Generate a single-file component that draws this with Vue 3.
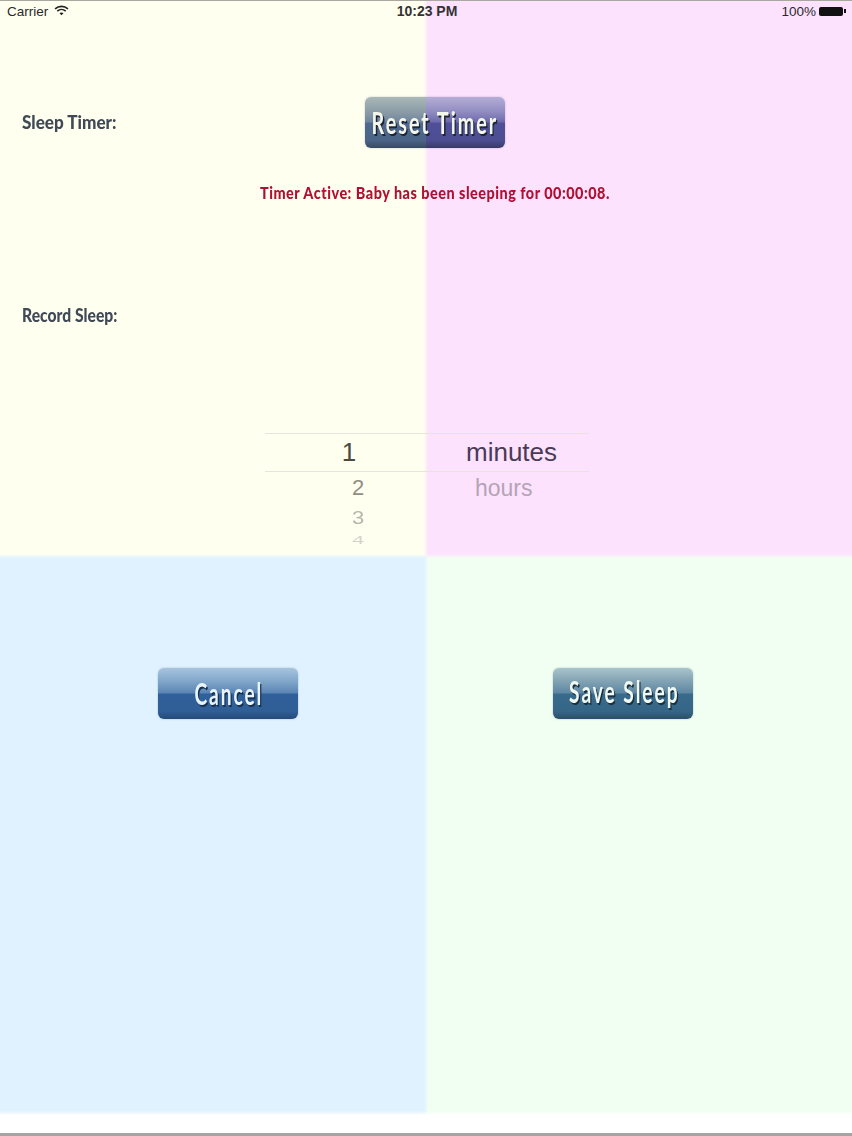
<script setup>
const numbers = [
  { value: '2', cls: 'n2' },
  { value: '3', cls: 'n3' },
  { value: '4', cls: 'n4' },
]
</script>

<template>
  <div class="screen">
    <header class="status">
      <div class="status-left">
        <span>Carrier</span>
        <svg class="wifi" viewBox="0 0 16 12" width="15" height="11">
          <path d="M1 4.2C5 .6 11 .6 15 4.2" fill="none" stroke="#222" stroke-width="1.7" />
          <path d="M3.4 6.6C6 4.4 10 4.4 12.6 6.6" fill="none" stroke="#222" stroke-width="1.7" />
          <path d="M5.8 9C7 8 9 8 10.2 9L8 11.2Z" fill="#222" />
        </svg>
      </div>
      <div class="status-time">10:23 PM</div>
      <div class="status-right">
        <span>100%</span>
        <span class="battery"></span>
        <span class="battery-cap"></span>
      </div>
    </header>

    <section class="top">
      <div class="timer-row">
        <div class="label"><span class="label-text sleep">Sleep Timer:</span></div>
        <button class="btn btn-reset"><span class="btn-text t-reset">Reset Timer</span></button>
      </div>
      <p class="active"><span class="active-text">Timer Active: Baby has been sleeping for 00:00:08.</span></p>
      <div class="label record"><span class="label-text rec">Record Sleep:</span></div>
      <div class="picker">
        <div class="picker-selected">
          <span class="num-main">1</span>
          <span class="unit-main">minutes</span>
        </div>
        <div class="picker-below">
          <div class="num-col">
            <span v-for="n in numbers" :key="n.value" :class="n.cls">{{ n.value }}</span>
          </div>
          <div class="unit-col">hours</div>
        </div>
      </div>
    </section>

    <section class="bottom">
      <button class="btn btn-cancel"><span class="btn-text t-cancel">Cancel</span></button>
      <button class="btn btn-save"><span class="btn-text t-save">Save Sleep</span></button>
    </section>

    <footer class="foot"></footer>
  </div>
</template>

<style>
html, body { margin: 0; background: #fff; }
</style>

<style scoped>
.screen {
  width: 852px;
  height: 1136px;
  box-sizing: border-box;
  position: relative;
  overflow: hidden;
  isolation: isolate;
  display: flex;
  flex-direction: column;
  font-family: "Liberation Sans", Arial, sans-serif;
  border-top: 1px solid #a8a8a0;
  background: #fff;
}
.screen::before {
  content: "";
  position: absolute;
  left: -6px;
  top: -6px;
  width: 864px;
  height: 1118px;
  z-index: -1;
  filter: blur(1.5px);
  background:
    linear-gradient(#fffff0, #fffff0) 0 0 / 432px 561px no-repeat,
    linear-gradient(#fde2fe, #fde2fe) 432px 0 / 432px 561px no-repeat,
    linear-gradient(#e0f2ff, #e0f2ff) 0 561px / 432px 557px no-repeat,
    linear-gradient(#f0fff2, #f0fff2) 432px 561px / 432px 557px no-repeat;
}

.status {
  height: 20px;
  flex: none;
  display: grid;
  grid-template-columns: 1fr auto 1fr;
  align-items: center;
  padding: 0 6px 0 7px;
  font-size: 13.5px;
  color: #2a2a2a;
}
.status-left { display: flex; align-items: center; gap: 6px; }
.wifi { display: block; margin-top: -2px; }
.status-time { font-weight: 700; font-size: 14px; color: #333; margin-left: 1px; }
.status-right { display: flex; justify-content: flex-end; align-items: center; }
.battery { width: 24px; height: 9px; background: #111; border-radius: 2px; margin-left: 3px; }
.battery-cap { width: 2px; height: 4px; background: #111; margin-left: 1px; }

.top {
  height: 535px;
  flex: none;
  box-sizing: border-box;
  display: flex;
  flex-direction: column;
}
.timer-row {
  display: flex;
  align-items: center;
  padding: 76px 0 0 22px;
}
.label {
  width: 343px;
  font-family: "Lato", sans-serif;
  font-weight: 900;
  font-size: 19px;
  line-height: 24px;
  color: #404a56;
}
.label-text {
  display: inline-block;
  white-space: nowrap;
  transform-origin: left center;
  position: relative;
  top: -1px;
}
.sleep { transform: scaleX(0.9); }
.rec { transform: scaleX(0.825); }

.btn {
  width: 140px;
  height: 51px;
  flex: none;
  border: 0;
  padding: 0;
  border-radius: 6px;
  display: flex;
  justify-content: center;
  align-items: center;
  font-family: "Lato", sans-serif;
  font-weight: 700;
  font-size: 30px;
  letter-spacing: 3px;
  color: #f4f6ea;
  text-shadow: 2px 1.5px 0 #1c2438;
  box-shadow: 0 0 2px rgba(60, 70, 90, 0.35);
}
.btn-text { display: block; flex: none; white-space: nowrap; position: relative; top: -1px; }
.t-reset { transform: scaleX(0.66); }
.t-cancel { transform: scaleX(0.64); left: 1px; }
.t-save { transform: scaleX(0.64); top: -3px; left: 1px; }
.btn-reset {
  background:
    linear-gradient(#b4aed6, #8f8bc0 30%, #6f6cae 48%, #4f5098 52%, #4c4d92 85%, #393a66) 61px 0 / 79px 100% no-repeat,
    linear-gradient(#a9b8b8, #8a9ba6 30%, #71879f 48%, #4f6a8e 52%, #4b6488 85%, #394a62) 0 0 / 61px 100% no-repeat;
}
.active {
  margin: 35px 0 0 260px;
  font-family: "Lato", sans-serif;
  font-weight: 900;
  font-size: 17px;
  line-height: 20px;
  letter-spacing: 0.6px;
  color: #b01032;
}
.active-text {
  display: inline-block;
  white-space: nowrap;
  transform: scaleX(0.847);
  transform-origin: left center;
}
.record { margin: 101px 0 0 22px; }

.picker {
  margin: 105px 0 0 265px;
  width: 324px;
  color: #3f3f3f;
}
.picker-selected {
  height: 37px;
  border-top: 1px solid #e6e4dc;
  border-bottom: 1px solid #e6e4dc;
  display: grid;
  grid-template-columns: 168px 1fr;
  align-items: center;
  font-size: 26px;
}
.num-main { text-align: center; color: #4a4a40; }
.unit-main { padding-left: 33px; color: #4a3a55; }
.picker-below {
  display: grid;
  grid-template-columns: 186px 1fr;
}
.num-col {
  display: flex;
  flex-direction: column;
  align-items: center;
}
.num-col span { display: block; font-size: 22px; line-height: 24px; }
.n2 { color: #8f8f84; margin-top: 4px; }
.n3 { color: #b6b6ac; transform: scaleY(0.8); margin-top: 6px; }
.n4 { color: #d4d4cc; transform: scaleY(0.5); margin-top: -2px; }
.unit-col {
  font-size: 23px;
  line-height: 24px;
  margin-top: 4px;
  padding-left: 24px;
  color: #b3a4b6;
}

.bottom {
  display: flex;
  padding: 112px 0 0 158px;
  gap: 255px;
}
.btn-cancel {
  background: linear-gradient(#a8c4de, #7da4c8 28%, #5c86b4 48%, #30609a 52%, #305e96 85%, #264a78);
  color: #e8f4fa;
  text-shadow: 2px 1.5px 0 #16304f;
}
.btn-save {
  background: linear-gradient(#a9c4cc, #7ea0b2 28%, #5f88a2 48%, #386a8c 52%, #366686 85%, #2a4f68);
  color: #f0f8f2;
  text-shadow: 2px 1.5px 0 #18303f;
}
.foot {
  position: absolute;
  left: 0;
  right: 0;
  bottom: 0;
  height: 3px;
  background: #a4a4a4;
}
</style>
